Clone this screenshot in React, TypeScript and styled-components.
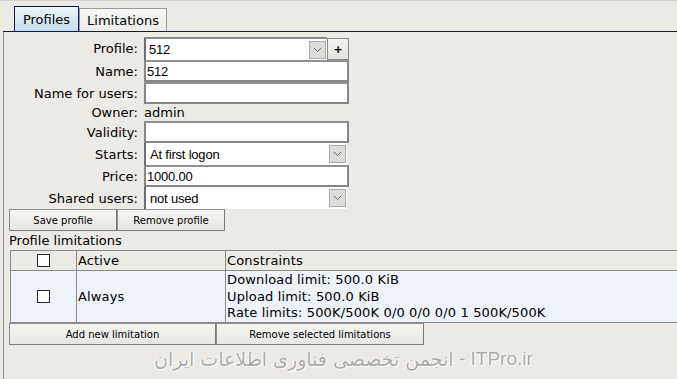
import React from "react";
import styled, { createGlobalStyle } from "styled-components";

const Global = createGlobalStyle`
  html, body { margin: 0; padding: 0; background: #ebeae5; }
  body { font-family: "DejaVu Sans", Verdana, sans-serif; font-size: 13px; color: #000; overflow: hidden; }
  * { box-sizing: border-box; }
`;

const Page = styled.div`
  width: 677px;
  height: 379px;
  overflow: hidden;
  background: #ebeae5;
  border-top: 1px solid #d2d2cd;
  padding-top: 5px;
  display: flex;
  flex-direction: column;
`;

const TabStrip = styled.div`
  margin-left: 3px;
  padding-left: 11px;
  display: flex;
  align-items: flex-end;
  border-bottom: 1px solid #15154f;
`;

const Tab = styled.div<{ $active?: boolean; $w: number }>`
  width: ${(p) => p.$w}px;
  height: ${(p) => (p.$active ? "25px" : "23px")};
  display: flex;
  align-items: center;
  justify-content: center;
  font-size: 13px;
  white-space: nowrap;
  border: 1px solid ${(p) => (p.$active ? "#15154f" : "#9a9a9a")};
  border-bottom: none;
  background: ${(p) =>
    p.$active
      ? "linear-gradient(#eef5fa, #c4dfef)"
      : "linear-gradient(#f7f7f5, #ecece8)"};
`;

const Panel = styled.div`
  flex: 1;
  margin-left: 3px;
  border-left: 1px solid #8b8b8b;
  display: flex;
  flex-direction: column;
`;

const Form = styled.div`
  margin-top: 5px;
  display: grid;
  grid-template-columns: 134px 206px;
  grid-template-rows: 23px 22px 22px 17px 22px 22px 22px 22px;
  column-gap: 6px;
  align-items: center;
`;

const Label = styled.div`
  text-align: right;
  font-size: 13px;
  white-space: nowrap;
`;

const Value = styled.div`
  font-size: 13px;
`;

const Input = styled.div`
  height: 22px;
  width: 205px;
  background: #fff;
  border: 2px solid #878787;
  border-top-color: #8f8f8f;
  display: flex;
  align-items: center;
  padding-left: 1px;
  font-family: "Liberation Sans", Arial, sans-serif;
  font-size: 13px;
  letter-spacing: -0.2px;
`;

const SelectRow = styled.div`
  display: flex;
  align-items: center;
`;

const Select = styled.div<{ $w: number; $top?: boolean }>`
  height: ${(p) => (p.$top ? "23px" : "22px")};
  width: ${(p) => p.$w}px;
  background: #fff;
  border-left: 2px solid #6f6f6f;
  border-top: ${(p) => (p.$top ? "2px solid #8c8c8c" : "none")};
  display: flex;
  align-items: center;
  justify-content: space-between;
  padding: 0 1px 0 ${(p) => (p.$top ? "3px" : "4px")};
  font-family: "Liberation Sans", Arial, sans-serif;
  font-size: 13px;
  letter-spacing: -0.2px;
`;

const Chevron = styled.div`
  width: 17px;
  height: 18px;
  background: #dcdcda;
  border: 1px solid #a9a9a9;
  display: flex;
  align-items: center;
  justify-content: center;
`;

const PlusButton = styled.div`
  width: 22px;
  height: 22px;
  background: linear-gradient(#f3f3f1, #e2e2de);
  border: 1px solid #8a8a8a;
  display: flex;
  align-items: center;
  justify-content: center;
  font-size: 11px;
  font-weight: bold;
  margin-top: 1px;
`;

const ButtonRow = styled.div`
  display: flex;
  padding-left: 5px;
`;

const Button = styled.div<{ $w: number }>`
  width: ${(p) => p.$w}px;
  height: 22px;
  background: linear-gradient(#f5f5f3, #e6e6e2);
  border: 1px solid #8c8c8c;
  border-right-color: #7a7a7a;
  border-bottom-color: #7a7a7a;
  display: flex;
  align-items: center;
  justify-content: center;
  font-size: 10px;
`;

const SectionTitle = styled.div`
  padding-left: 5px;
  height: 19px;
  display: flex;
  align-items: center;
  font-size: 13px;
`;

const Table = styled.div`
  margin-left: 6px;
  width: 700px;
  border-top: 1px solid #8a8a8a;
  border-left: 1px solid #8a8a8a;
  display: grid;
  grid-template-columns: 66px 149px 1fr;
`;

const Cell = styled.div<{ $body?: boolean; $center?: boolean }>`
  border-right: 1px solid #8a8a8a;
  border-bottom: 1px solid #8a8a8a;
  background: ${(p) => (p.$body ? "#eef3fb" : "#ebeae5")};
  height: ${(p) => (p.$body ? "52px" : "20px")};
  display: flex;
  align-items: center;
  justify-content: ${(p) => (p.$center ? "center" : "flex-start")};
  padding-left: ${(p) => (p.$center ? "0" : "1px")};
  font-size: 13px;
  letter-spacing: 0.15px;
`;

const Lines = styled.div`
  display: flex;
  flex-direction: column;
  line-height: 16.5px;
  padding-top: 1px;
  white-space: nowrap;
`;

const Box = styled.div`
  width: 13px;
  height: 13px;
  background: #fff;
  border: 1px solid #2a2a2a;
`;

const BottomButtons = styled(ButtonRow)`
  margin-top: 0px;
`;

const Watermark = styled.div`
  margin-top: 1px;
  padding-left: 150px;
  height: 26px;
  display: flex;
  align-items: center;
  color: #acaca8;
  text-shadow: 1px 1px 0 #fff, -1px 0 0 #fff;
  white-space: nowrap;
`;

const Fa = styled.span`
  font-family: "DejaVu Sans", sans-serif;
  font-size: 19px;
`;

const En = styled.span`
  font-family: "Liberation Sans", Arial, sans-serif;
  font-size: 19px;
`;

const ChevronIcon = () => (
  <svg width="9" height="6" viewBox="0 0 9 6">
    <path d="M1 1 L4.5 4.5 L8 1" fill="none" stroke="#6a6a6a" strokeWidth="1" />
  </svg>
);

export default function App() {
  return (
    <>
      <Global />
      <Page>
        <TabStrip>
          <Tab $active $w={65}>Profiles</Tab>
          <Tab $w={88}>Limitations</Tab>
        </TabStrip>
        <Panel>
          <Form>
            <Label>Profile:</Label>
            <SelectRow>
              <Select $w={183} $top>
                <span>512</span>
                <Chevron>
                  <ChevronIcon />
                </Chevron>
              </Select>
              <PlusButton>+</PlusButton>
            </SelectRow>

            <Label>Name:</Label>
            <Input>512</Input>

            <Label>Name for users:</Label>
            <Input />

            <Label>Owner:</Label>
            <Value>admin</Value>

            <Label>Validity:</Label>
            <Input />

            <Label>Starts:</Label>
            <Select $w={203}>
              <span>At first logon</span>
              <Chevron>
                <ChevronIcon />
              </Chevron>
            </Select>

            <Label>Price:</Label>
            <Input>1000.00</Input>

            <Label>Shared users:</Label>
            <Select $w={203}>
              <span>not used</span>
              <Chevron>
                <ChevronIcon />
              </Chevron>
            </Select>
          </Form>

          <ButtonRow>
            <Button $w={108}>Save profile</Button>
            <Button $w={108}>Remove profile</Button>
          </ButtonRow>

          <SectionTitle>Profile limitations</SectionTitle>

          <Table>
            <Cell $center>
              <Box />
            </Cell>
            <Cell>Active</Cell>
            <Cell>Constraints</Cell>
            <Cell $body $center>
              <Box />
            </Cell>
            <Cell $body>Always</Cell>
            <Cell $body>
              <Lines>
                <span>Download limit: 500.0 KiB</span>
                <span>Upload limit: 500.0 KiB</span>
                <span>Rate limits: 500K/500K 0/0 0/0 0/0 1 500K/500K</span>
              </Lines>
            </Cell>
          </Table>

          <BottomButtons>
            <Button $w={207}>Add new limitation</Button>
            <Button $w={208}>Remove selected limitations</Button>
          </BottomButtons>

          <Watermark>
            <Fa>انجمن تخصصی فناوری اطلاعات ایران</Fa>
            <En>&nbsp;- ITPro.ir</En>
          </Watermark>
        </Panel>
      </Page>
    </>
  );
}
